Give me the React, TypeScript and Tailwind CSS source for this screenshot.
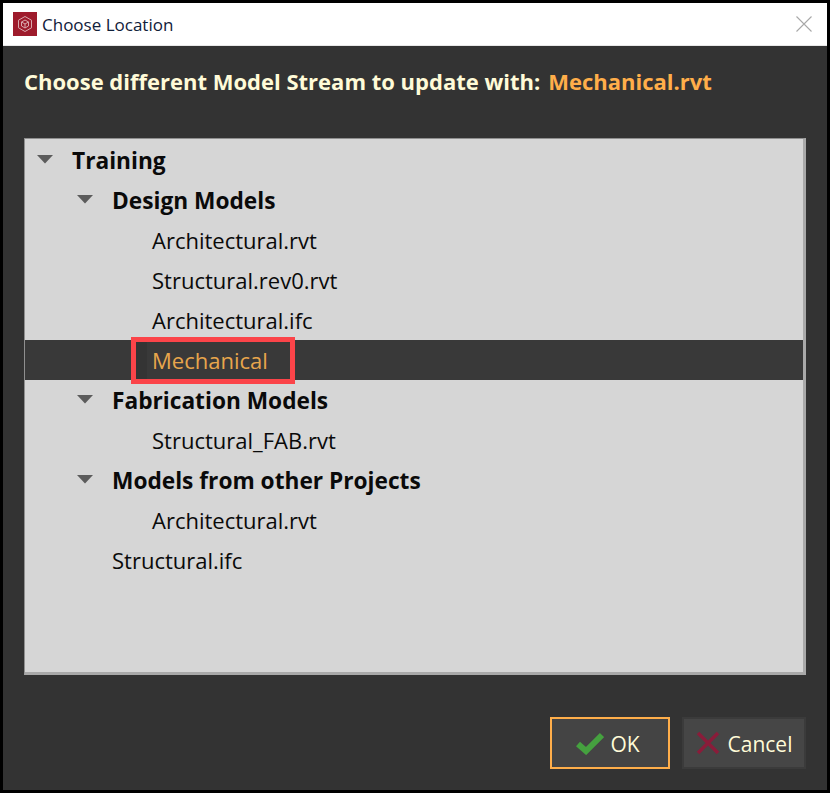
const FONT = "font-['Open_Sans','Noto_Sans',sans-serif]";

interface RowProps {
  label: string;
  depth: number;
  bold?: boolean;
  arrow?: boolean;
  selected?: boolean;
}

const rows: RowProps[] = [
  { label: "Training", depth: 0, bold: true, arrow: true },
  { label: "Design Models", depth: 1, bold: true, arrow: true },
  { label: "Architectural.rvt", depth: 2 },
  { label: "Structural.rev0.rvt", depth: 2 },
  { label: "Architectural.ifc", depth: 2 },
  { label: "Mechanical", depth: 2, selected: true },
  { label: "Fabrication Models", depth: 1, bold: true, arrow: true },
  { label: "Structural_FAB.rvt", depth: 2 },
  { label: "Models from other Projects", depth: 1, bold: true, arrow: true },
  { label: "Architectural.rvt", depth: 2 },
  { label: "Structural.ifc", depth: 1 },
];

const Row = ({ label, depth, bold, arrow, selected }: RowProps) => (
  <div
    className={`relative flex h-10 items-center ${selected ? "bg-[#393939] text-[#e8a64c]" : "text-[#0a0a0a]"} ${
      depth === 0 ? "pl-[47px]" : depth === 1 ? "pl-[87px]" : "pl-[127px]"
    }`}
  >
    {arrow && (
      <svg width="16" height="9" viewBox="0 0 16 9" className="absolute top-[15px] -ml-[35px]">
        <path d="M0 0H16L8 8.5Z" fill="#5c5c5c" />
      </svg>
    )}
    <span className={`relative leading-none ${bold ? "pt-[3px] text-[22.7px] font-bold" : "text-[22px] font-normal"}`}>
      {label}
    </span>
    {selected && (
      <div className="absolute left-[106px] top-[-3px] h-[47px] w-[164px] border-[5px] border-[#fb4449]">
        <div className="h-full w-[11px] bg-[#343434]" />
      </div>
    )}
  </div>
);

export default function App() {
  return (
    <div className={`flex h-[793px] w-[830px] flex-col border-[3px] border-black bg-[#333333] ${FONT}`}>
      <div className="flex h-[43px] shrink-0 items-center border-b border-[#e8e8e8] bg-white pl-[10px] pr-[15px]">
        <div className="flex h-6 w-6 items-center justify-center bg-[#9e1b2c]">
          <svg width="18" height="18" viewBox="0 0 18 18" fill="none" stroke="#d9a9ae" strokeWidth="1">
            <path d="M9 1.5L15.5 5.2V12.8L9 16.5L2.500 12.8V5.200Z" />
            <path d="M9 5L12.500 7V11L9 13L5.500 11V7Z" />
            <path d="M5.500 7L9 9L12.500 7M9 9V13" />
          </svg>
        </div>
        <span className="ml-[5px] pt-[2px] text-[17px] text-[#10203a]">Choose Location</span>
        <svg width="16" height="16" viewBox="0 0 16 16" className="ml-auto" stroke="#a8a8a8" strokeWidth="1.1">
          <path d="M0.500 0.500L15.500 15.500M15.500 0.500L0.500 15.500" />
        </svg>
      </div>

      <div className="flex min-h-0 flex-1 flex-col px-[21px]">
        <div className="mt-[20px] flex h-[30px] items-center text-[22px] font-bold">
          <span className="text-[#fffbd8]">Choose different Model Stream to update with:</span>
          <span className="ml-[8px] text-[#ffae4a]">Mechanical.rvt</span>
        </div>

        <div className="mt-[42px] h-[537px] w-[782px] border border-b-[3px] border-r-[3px] border-[#8f8f8f] border-r-[#a9a9a9] border-b-[#a9a9a9] bg-[#d6d6d6] pt-[1px]">
          {rows.map((row, i) => (
            <Row key={i} {...row} />
          ))}
        </div>

        <div className="mt-[42px] flex justify-end gap-3">
          <button className="flex h-[52px] w-[120px] items-center justify-center border-2 border-[#ffae4a] bg-[#444444] pr-[4px] text-[21px] text-[#fffbd8]">
            <svg width="28" height="24" viewBox="0 0 28 24" className="mr-[6px]">
              <path d="M2 13L10 20L26 4" fill="none" stroke="#45a13f" strokeWidth="6" />
            </svg>
            <span className="pt-[3px]">OK</span>
          </button>
          <button className="flex h-[52px] w-[124px] items-center justify-center border-2 border-[#3b3b3b] bg-[#464646] text-[21px] text-[#fffbd8]">
            <svg width="24" height="24" viewBox="0 0 24 24" className="mr-[8px]">
              <path d="M2 2L22 22M22 2L2 22" fill="none" stroke="#8a1c3a" strokeWidth="3.500" />
            </svg>
            <span className="pt-[3px]">Cancel</span>
          </button>
        </div>
      </div>
    </div>
  );
}
